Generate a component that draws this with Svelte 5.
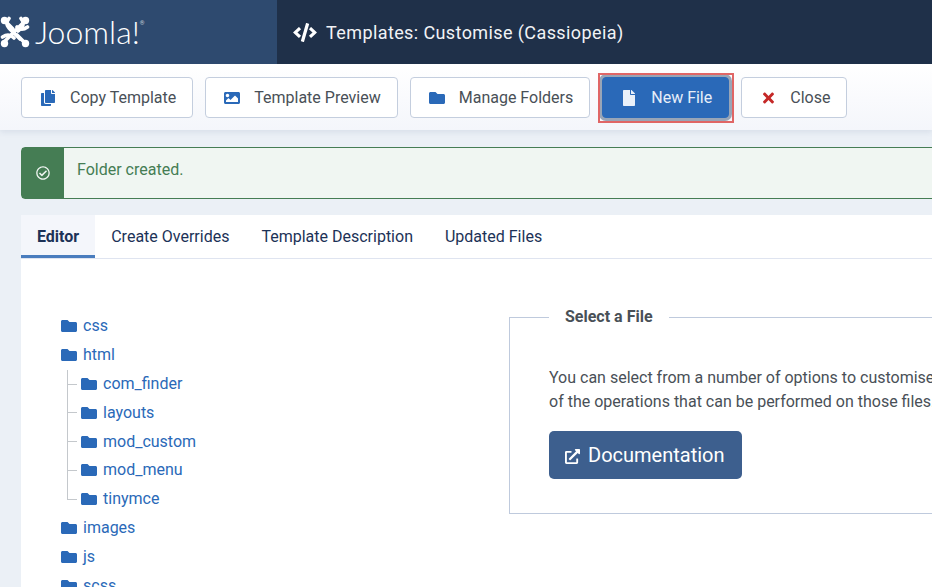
<script lang="ts">
  const paths = {
    copy: "M320 448v40c0 13.255-10.745 24-24 24H24c-13.255 0-24-10.745-24-24V120c0-13.255 10.745-24 24-24h72v296c0 30.879 25.121 56 56 56h168zm0-344V0H152c-13.255 0-24 10.745-24 24v368c0 13.255 10.745 24 24 24h272c13.255 0 24-10.745 24-24V128H344c-13.2 0-24-10.8-24-24zm120.971-31.029L375.029 7.029A24 24 0 0 0 358.059 0H352v96h96v-6.059a24 24 0 0 0-7.029-16.97z",
    image: "M464 448H48c-26.51 0-48-21.49-48-48V112c0-26.51 21.49-48 48-48h416c26.51 0 48 21.49 48 48v288c0 26.51-21.49 48-48 48zM112 120c-30.928 0-56 25.072-56 56s25.072 56 56 56 56-25.072 56-56-25.072-56-56-56zM64 384h384V272l-87.515-87.515c-4.686-4.686-12.284-4.686-16.971 0L208 320l-55.515-55.515c-4.686-4.686-12.284-4.686-16.971 0L64 336v48z",
    folder: "M464 128H272l-64-64H48C21.49 64 0 85.49 0 112v288c0 26.51 21.49 48 48 48h416c26.51 0 48-21.49 48-48V176c0-26.51-21.49-48-48-48z",
    file: "M224 136V0H24C10.7 0 0 10.7 0 24v464c0 13.3 10.7 24 24 24h336c13.3 0 24-10.7 24-24V160H248c-13.2 0-24-10.8-24-24zm160-14.1v6.1H256V0h6.1c6.4 0 12.5 2.5 17 7l97.9 98c4.5 4.5 7 10.6 7 16.9z",
    times: "M242.72 256l100.07-100.07c12.28-12.28 12.28-32.19 0-44.48l-22.24-22.24c-12.28-12.28-32.19-12.28-44.48 0L176 189.28 75.93 89.21c-12.28-12.28-32.19-12.28-44.48 0L9.21 111.45c-12.28 12.28-12.28 32.19 0 44.48L109.28 256 9.21 356.07c-12.28 12.28-12.28 32.19 0 44.48l22.24 22.24c12.28 12.28 32.2 12.28 44.48 0L176 322.72l100.07 100.07c12.28 12.28 32.2 12.28 44.48 0l22.24-22.24c12.28-12.28 12.28-32.19 0-44.48L242.72 256z"
  };
  const boxes = { copy: 448, image: 512, folder: 512, file: 384, times: 352 };

  const actions = [
    { label: "Copy Template", icon: "copy" },
    { label: "Template Preview", icon: "image" },
    { label: "Manage Folders", icon: "folder" },
    { label: "New File", icon: "file", primary: true },
    { label: "Close", icon: "times", danger: true }
  ];
  const tabs = ["Editor", "Create Overrides", "Template Description", "Updated Files"];
  const tree = [
    { name: "css" },
    { name: "html", children: ["com_finder", "layouts", "mod_custom", "mod_menu", "tinymce"] },
    { name: "images" },
    { name: "js" },
    { name: "scss" }
  ];
</script>

<div class="page">
  <header class="topbar">
    <div class="brand">
      <svg class="logo-mark" viewBox="0 0 30 32" aria-hidden="true">
        <g fill="none" stroke="#fff" stroke-width="3.6" stroke-linecap="round">
          <path d="M4.5 4.5 L13 13 M17 19 L25.500 27.500" />
          <path d="M25.500 4.500 L5 25" />
          <path d="M9 2.500 C4 9 9 12 15 18 L20 23" />
          <path d="M21 2.500 C26 9 21 12 18 15" />
          <path d="M2.500 21 C9 17 12 20 14 22 M27.500 11 C22 15 19 13 17 11" />
        </g>
        <circle cx="4.500" cy="4.500" r="3.700" fill="#fff" />
        <circle cx="25.500" cy="4.500" r="3.700" fill="#fff" />
        <circle cx="4.500" cy="27.500" r="3.700" fill="#fff" />
        <circle cx="25.500" cy="27.500" r="3.700" fill="#fff" />
      </svg>
      <span class="logo-text">Joomla!</span><span class="logo-reg">®</span>
    </div>
    <div class="page-title">
      <svg class="code-icon" viewBox="0 0 640 512" aria-hidden="true">
        <path fill="currentColor" d="M278.9 511.5l-61-17.7c-6.4-1.8-10-8.5-8.2-14.9L346.2 8.7c1.8-6.4 8.5-10 14.9-8.2l61 17.7c6.4 1.8 10 8.5 8.2 14.9L293.8 503.3c-1.9 6.4-8.5 10.1-14.9 8.2zm-114-112.2l43.5-46.4c4.6-4.9 4.3-12.7-.8-17.2L117 256l90.6-79.7c5.1-4.5 5.5-12.3.8-17.2l-43.5-46.4c-4.5-4.8-12.1-5.1-17-.5L3.8 247.2c-5.1 4.7-5.1 12.8 0 17.5l144.1 135.1c4.9 4.6 12.5 4.4 17-.5zm327.2.6l144.1-135.1c5.1-4.7 5.1-12.8 0-17.5L492.1 112.1c-4.8-4.5-12.4-4.3-17 .5L431.6 159c-4.6 4.9-4.3 12.7.8 17.2L523 256l-90.6 79.7c-5.1 4.5-5.5 12.3-.8 17.2l43.5 46.4c4.5 4.9 12.1 5.1 17 .6z" />
      </svg>
      <h1>Templates: Customise (Cassiopeia)</h1>
    </div>
  </header>

  <nav class="toolbar">
    {#each actions as action}
      <button type="button" class="tool" class:primary={action.primary} class:danger={action.danger}>
        <span class="tool-icon">
          <svg viewBox="0 0 {boxes[action.icon]} 512" aria-hidden="true"><path fill="currentColor" d={paths[action.icon]} /></svg>
        </span>
        {action.label}
        {#if action.primary}<span class="highlight"></span>{/if}
      </button>
    {/each}
  </nav>

  <main class="content">
    <div class="alert">
      <div class="alert-icon">
        <svg viewBox="0 0 512 512" aria-hidden="true">
          <path fill="currentColor" d="M256 8C119.033 8 8 119.033 8 256s111.033 248 248 248 248-111.033 248-248S392.967 8 256 8zm0 48c110.532 0 200 89.451 200 200 0 110.532-89.451 200-200 200-110.532 0-200-89.451-200-200 0-110.532 89.451-200 200-200m140.204 130.267l-22.536-22.718c-4.667-4.705-12.265-4.736-16.97-.068L215.346 303.697l-59.792-60.277c-4.667-4.705-12.265-4.736-16.97-.069l-22.719 22.536c-4.705 4.667-4.736 12.265-.068 16.971l90.781 91.516c4.667 4.705 12.265 4.736 16.97.068l172.589-171.204c4.704-4.668 4.734-12.266.067-16.971z" />
        </svg>
      </div>
      <div class="alert-text">Folder created.</div>
    </div>

    <section class="card">
      <div class="tabs">
        {#each tabs as tab, i}
          <div class="tab" class:active={i === 0}>{tab}</div>
        {/each}
      </div>

      <div class="editor">
        <ul class="tree">
          {#each tree as dir}
            <li>
              <div class="node">
                <svg viewBox="0 0 512 512" aria-hidden="true"><path fill="currentColor" d={paths.folder} /></svg>
                {dir.name}
              </div>
              {#if dir.children}
                <ul class="subtree">
                  {#each dir.children as child}
                    <li class="node">
                      <svg viewBox="0 0 512 512" aria-hidden="true"><path fill="currentColor" d={paths.folder} /></svg>
                      {child}
                    </li>
                  {/each}
                </ul>
              {/if}
            </li>
          {/each}
        </ul>

        <fieldset class="select-file">
          <legend>Select a File</legend>
          <p>You can select from a number of options to customise your template and its files. Here is a list<br />of the operations that can be performed on those files.</p>
          <button type="button" class="docs">
            <svg viewBox="0 0 512 512" aria-hidden="true">
              <path fill="currentColor" d="M432,320H400a16,16,0,0,0-16,16V448H64V128H208a16,16,0,0,0,16-16V80a16,16,0,0,0-16-16H48A48,48,0,0,0,0,112V464a48,48,0,0,0,48,48H400a48,48,0,0,0,48-48V336A16,16,0,0,0,432,320ZM488,0h-128c-21.37,0-32.05,25.91-17,41l35.73,35.73L135,320.37a24,24,0,0,0,0,34L157.67,377a24,24,0,0,0,34,0L435.28,133.32,471,169c15,15,41,4.5,41-17V24A24,24,0,0,0,488,0Z" />
            </svg>
            Documentation
          </button>
        </fieldset>
      </div>
    </section>
  </main>
</div>

<style>
  :global(body) { margin: 0; background: #ebf0f6; overflow: hidden; }
  .page { width: 932px; height: 587px; overflow: hidden; font-family: Roboto, "Liberation Sans", sans-serif; font-size: 16px; line-height: 1.5; color: #495057; }

  .topbar { display: flex; height: 64px; background: #1f3049; }
  .brand { width: 277px; flex: none; display: flex; align-items: center; background: #2e4a6f; color: #fff; }
  .logo-mark { width: 30px; height: 32px; flex: none; }
  .logo-text { margin-left: 5px; font-family: Lato, sans-serif; font-weight: 300; font-size: 32px; line-height: 1; }
  .logo-reg { align-self: flex-start; margin-top: 20px; font-size: 6px; line-height: 1; color: #c5cdd8; }
  .page-title { display: flex; align-items: center; padding-left: 16px; color: #fff; }
  .code-icon { width: 24px; height: 19px; margin-right: 9px; }
  h1 { margin: 0; font-size: 18px; font-weight: 400; letter-spacing: 0.4px; color: #f1f3f6; }

  .toolbar { display: flex; gap: 12px; height: 66px; padding: 13px 21px 0; box-sizing: border-box; background: linear-gradient(#fff, #f4f6fb); box-shadow: 0 2px 6px rgba(40, 70, 120, 0.1); position: relative; }
  .tool { position: relative; display: flex; align-items: center; height: 41px; padding: 0 16px; gap: 12px; border: 1px solid #c4cede; border-radius: 4px; background: #fff; color: #495057; font: inherit; white-space: nowrap; }
  .tool-icon { display: flex; justify-content: center; width: 20px; color: #2a69b8; }
  .tool-icon svg { height: 16px; }
  .tool.danger .tool-icon { color: #c52827; }
  .tool.primary { background: #2a69b8; border-color: #2a69b8; color: #e6eef8; box-shadow: 0 0 0 3px #98a5b7; }
  .tool.primary .tool-icon { color: #e9f0f9; }
  .highlight { position: absolute; inset: -5px -6px -6px -5px; border: 2px solid #e06666; }

  .content { padding: 17px 0 0 21px; width: 1300px; }
  .alert { display: flex; height: 52px; box-sizing: border-box; border: 1px solid #457d54; border-radius: 4px; background: #f0f6f2; color: #457d54; }
  .alert-icon { display: flex; align-items: center; justify-content: center; width: 42px; background: #457d54; color: #f0f6f2; }
  .alert-icon svg { width: 14px; height: 14px; }
  .alert-text { padding: 0 13px; line-height: 44px; }

  .card { margin-top: 16px; background: #fff; height: 400px; }
  .tabs { display: flex; height: 44px; box-sizing: border-box; border-bottom: 1px solid #dfe4f0; }
  .tab { height: 43px; box-sizing: border-box; padding: 10px 16px 0; color: #1c3257; }
  .tab.active { background: #f4f6fb; border-bottom: 3px solid #4a7dbe; font-weight: 700; }

  .editor { display: flex; padding: 46px 0 0 40px; }
  .tree { width: 448px; flex: none; list-style: none; margin: 7px 0 0; padding: 0; }
  .subtree { position: relative; list-style: none; margin: 0; padding: 0 0 0 20px; }
  .subtree::before { content: ""; position: absolute; left: 6px; top: 0; bottom: 14px; border-left: 1px solid #c4c8cc; }
  .subtree .node { position: relative; }
  .subtree .node::before { content: ""; position: absolute; left: -14px; top: 14px; width: 10px; border-top: 1px solid #c4c8cc; }
  .node { display: flex; align-items: center; gap: 6px; height: 28.8px; color: #2a69b8; white-space: nowrap; }
  .node svg { width: 16px; height: 16px; flex: none; }

  .select-file { margin: 0; padding: 0 39px; width: 700px; height: 209px; box-sizing: border-box; border: 1px solid #bfcadd; }
  legend { margin-left: 0; padding: 0 16px; font-weight: 700; color: #495057; }
  .select-file p { margin: 37px 0 17px; white-space: nowrap; }
  .docs { display: inline-flex; align-items: center; gap: 8px; height: 48px; padding: 0 17px 0 16px; border: 0; border-radius: 5px; background: #3d5f8e; color: #fff; font: inherit; font-size: 20px; }
  .docs svg { width: 15px; height: 15px; margin-top: 3px; }
</style>
